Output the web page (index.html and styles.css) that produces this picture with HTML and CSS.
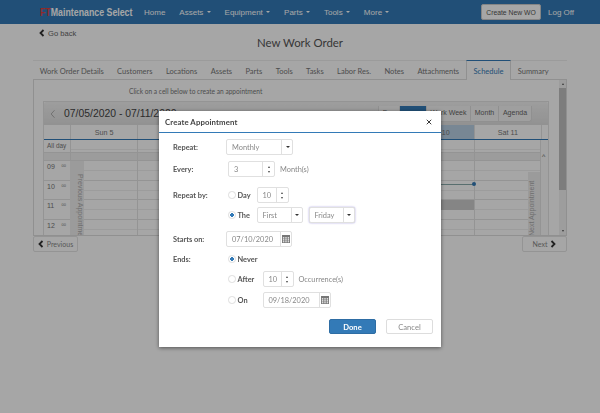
FILE: index.html
```html
<!DOCTYPE html>
<html lang="en">

<head>
  <meta charset="UTF-8">
  <meta name="viewport" content="width=device-width, initial-scale=1.0">
  <title>New Work Order</title>
  <link rel="stylesheet" href="styles.css">
</head>

<body>
  <header class="navbar">
    <div class="logo"><span class="logo-text"><span class="logo-ft">FT</span>Maintenance Select</span></div>
    <nav class="nav-links">
      <a>Home</a>
      <a>Assets <i class="caret"></i></a>
      <a>Equipment <i class="caret"></i></a>
      <a>Parts <i class="caret"></i></a>
      <a>Tools <i class="caret"></i></a>
      <a>More <i class="caret"></i></a>
    </nav>
    <button class="new-wo">Create New WO</button>
    <a class="log-off">Log Off</a>
  </header>

  <main class="page">
    <div class="go-back">
      <svg class="chev" viewBox="0 0 8 10"><path d="M6 1 2 5l4 4" /></svg>
      Go back
    </div>
    <h1 class="title">New Work Order</h1>

    <div class="tabs">
      <span class="tab">Work Order Details</span>
      <span class="tab">Customers</span>
      <span class="tab">Locations</span>
      <span class="tab">Assets</span>
      <span class="tab">Parts</span>
      <span class="tab">Tools</span>
      <span class="tab">Tasks</span>
      <span class="tab">Labor Res.</span>
      <span class="tab">Notes</span>
      <span class="tab">Attachments</span>
      <span class="tab active">Schedule</span>
      <span class="tab">Summary</span>
    </div>

    <section class="panel">
      <div class="panel-main">
        <p class="hint">Click on a cell below to create an appointment</p>
        <div class="scheduler">
          <div class="toolbar">
            <svg class="tool-prev" viewBox="0 0 8 12"><path d="M6 1 1.5 6 6 11" /></svg>
            <span class="date-range">07/05/2020 - 07/11/2020</span>
            <div class="views">
              <span class="view view-day">Day</span>
              <span class="view view-active">Week</span>
              <span class="view view-ww">Work Week</span>
              <span class="view view-month">Month</span>
              <span class="view view-agenda">Agenda</span>
            </div>
          </div>

          <div class="cal-head">
            <div class="time-head"></div>
            <div class="day-name">Sun 5</div>
            <div class="day-name">Mon 6</div>
            <div class="day-name">Tue 7</div>
            <div class="day-name">Wed 8</div>
            <div class="day-name">Thu 9</div>
            <div class="day-name today">Fri 10</div>
            <div class="day-name">Sat 11</div>
            <div class="scroll-col"></div>
          </div>

          <div class="cal-body">
            <div class="row row-allday">
              <div class="time allday">All day</div>
              <div class="days"></div>
            </div>
            <div class="row row-spacer">
              <div class="time"></div>
              <div class="days"></div>
            </div>
            <div class="row row-hour">
              <div class="time"><b>09</b><small>00</small></div>
              <div class="days"></div>
            </div>
            <div class="row row-hour">
              <div class="time"><b>10</b><small>00</small></div>
              <div class="days">
                <div class="event-line"></div>
              </div>
            </div>
            <div class="row row-hour">
              <div class="time"><b>11</b><small>00</small></div>
              <div class="days">
                <div class="busy-cell"></div>
              </div>
            </div>
            <div class="row row-hour">
              <div class="time"><b>12</b><small>00</small></div>
              <div class="days"></div>
            </div>

            <div class="strip strip-prev">Previous Appointment</div>
            <div class="strip strip-next">Next Appointment</div>
            <div class="scroll-col scroll-body"><span class="scroll-up">^</span></div>
          </div>
        </div>
      </div>
      <div class="scrollbar">
        <i class="sb-up"></i>
        <div class="sb-track"><div class="sb-thumb"></div></div>
        <i class="sb-down"></i>
      </div>
    </section>

    <div class="pager">
      <button class="page-btn">
        <svg class="chev" viewBox="0 0 8 10"><path d="M6 1 2 5l4 4" /></svg>
        Previous
      </button>
      <button class="page-btn">
        Next
        <svg class="chev" viewBox="0 0 8 10"><path d="M2 1l4 4-4 4" /></svg>
      </button>
    </div>
  </main>

  <div class="backdrop"></div>

  <div class="modal">
    <div class="modal-head">
      <span>Create Appointment</span>
      <svg class="close" viewBox="0 0 8 8"><path d="M1 1l6 6M7 1 1 7" /></svg>
    </div>
    <div class="modal-body">
      <div class="form-row r-repeat">
        <label class="lbl">Repeat:</label>
        <div class="combo w-monthly"><span class="val">Monthly</span><span class="arrow"><i class="caret"></i></span></div>
      </div>
      <div class="form-row r-every">
        <label class="lbl">Every:</label>
        <div class="num w-every"><span class="val">3</span><span class="spin"><i class="up"></i><i class="down"></i></span></div>
        <span class="note">Month(s)</span>
      </div>
      <div class="form-row r-by">
        <label class="lbl">Repeat by:</label>
        <span class="radio"></span><span class="opt opt-day">Day</span>
        <div class="num w-day"><span class="val">10</span><span class="spin"><i class="up"></i><i class="down"></i></span></div>
      </div>
      <div class="form-row r-the">
        <label class="lbl"></label>
        <span class="radio on"></span><span class="opt opt-the">The</span>
        <div class="combo w-first"><span class="val">First</span><span class="arrow"><i class="caret"></i></span></div>
        <div class="combo w-first focus"><span class="val">Friday</span><span class="arrow"><i class="caret"></i></span></div>
      </div>
      <div class="form-row r-starts">
        <label class="lbl">Starts on:</label>
        <div class="combo w-date"><span class="val">07/10/2020</span>
          <span class="arrow">
            <svg class="cal-icon" viewBox="0 0 9 9"><path d="M0 0h9v9H0zM1 2.5v1.4h1.6V2.5zm2.7 0v1.4h1.6V2.5zm2.7 0v1.4H8V2.5zM1 4.8v1.4h1.6V4.8zm2.7 0v1.4h1.6V4.8zm2.7 0v1.4H8V4.8zM1 7v1.2h1.6V7zm2.7 0v1.2h1.6V7zm2.7 0v1.2H8V7z" fill-rule="evenodd" /></svg>
          </span>
        </div>
      </div>
      <div class="form-row r-ends">
        <label class="lbl">Ends:</label>
        <span class="radio on"></span><span class="opt">Never</span>
      </div>
      <div class="form-row r-after">
        <label class="lbl"></label>
        <span class="radio"></span><span class="opt opt-after">After</span>
        <div class="num w-after"><span class="val">10</span><span class="spin"><i class="up"></i><i class="down"></i></span></div>
        <span class="note">Occurrence(s)</span>
      </div>
      <div class="form-row r-on">
        <label class="lbl"></label>
        <span class="radio"></span><span class="opt opt-after">On</span>
        <div class="combo w-date"><span class="val">09/18/2020</span>
          <span class="arrow">
            <svg class="cal-icon" viewBox="0 0 9 9"><path d="M0 0h9v9H0zM1 2.5v1.4h1.6V2.5zm2.7 0v1.4h1.6V2.5zm2.7 0v1.4H8V2.5zM1 4.8v1.4h1.6V4.8zm2.7 0v1.4h1.6V4.8zm2.7 0v1.4H8V4.8zM1 7v1.2h1.6V7zm2.7 0v1.2h1.6V7zm2.7 0v1.2H8V7z" fill-rule="evenodd" /></svg>
          </span>
        </div>
      </div>
      <div class="modal-actions">
        <button class="btn-done">Done</button>
        <button class="btn-cancel">Cancel</button>
      </div>
    </div>
  </div>
</body>

</html>
```

FILE: styles.css
```css
* {
  box-sizing: border-box;
}

body {
  margin: 0;
  height: 413px;
  overflow: hidden;
  background-color: #fff;
  color: #333;
  font-family: "Liberation Sans", Arial, sans-serif;
}

/* top bar */
.navbar {
  display: flex;
  align-items: center;
  height: 24px;
  padding-left: 40px;
  background-color: #337ab7;
  color: #fff;
  font-size: 8px;
}

.logo {
  width: 104px;
  flex: none;
  font-size: 11px;
  font-weight: bold;
  white-space: nowrap;
}

.logo-text {
  display: inline-block;
  transform: scaleX(0.8);
  transform-origin: left center;
}

.logo-ft {
  color: #e0403c;
}

.nav-links {
  display: flex;
  gap: 14px;
  width: 337px;
}

.caret {
  display: inline-block;
  width: 0;
  height: 0;
  margin-left: 1px;
  vertical-align: middle;
  border-top: 2.5px solid currentColor;
  border-left: 2.5px solid transparent;
  border-right: 2.5px solid transparent;
}

.new-wo {
  width: 60px;
  height: 16px;
  padding: 0;
  background-color: #fff;
  border: 1px solid #ccc;
  border-radius: 2px;
  color: #555;
  font-family: inherit;
  font-size: 6.8px;
}

.log-off {
  margin-left: 7px;
}

/* page under the dialog */
.page {
  padding: 0 33px;
}

.chev {
  width: 6px;
  height: 8px;
  fill: none;
  stroke: #333;
  stroke-width: 2.4;
}

.go-back {
  display: flex;
  align-items: center;
  gap: 3px;
  height: 12px;
  margin-top: 3px;
  padding-left: 6px;
  color: #666;
  font-size: 7.6px;
}

.title {
  height: 24px;
  margin: -3px 0 0;
  color: #555;
  font-family: Lato, sans-serif;
  font-size: 11.4px;
  font-weight: normal;
  line-height: 14px;
  text-align: center;
}

.tabs {
  display: flex;
  height: 20px;
  border-top: 1px solid #eee;
  border-bottom: 1px solid #ddd;
  font-family: Lato, sans-serif;
  font-size: 7.5px;
  color: #777;
}

.tab {
  padding: 6px 6.7px 0;
  white-space: nowrap;
}

.tab.active {
  height: 20px;
  margin-top: -1px;
  background-color: #fff;
  border-top: 1px solid #337ab7;
  border-left: 1px solid #ddd;
  border-right: 1px solid #ddd;
  color: #337ab7;
}

.panel {
  display: flex;
  height: 156px;
  overflow: hidden;
  border: 1px solid #ddd;
  border-top: 0;
}

.panel-main {
  flex: 1;
  min-width: 0;
  padding: 0 9px;
}

.hint {
  height: 21px;
  margin: 0;
  padding: 7px 0 0 86px;
  color: #777;
  font-family: Lato, sans-serif;
  font-size: 6.6px;
}

.scrollbar {
  display: flex;
  flex-direction: column;
  align-items: center;
  width: 7px;
  background-color: #f1f1f1;
}

.sb-up,
.sb-down {
  width: 0;
  height: 0;
  margin: 3px 0;
  border-left: 1.5px solid transparent;
  border-right: 1.5px solid transparent;
}

.sb-up {
  border-bottom: 2px solid #555;
}

.sb-down {
  border-top: 2px solid #555;
}

.sb-track {
  flex: 1;
  width: 100%;
}

.sb-thumb {
  height: 102px;
  background-color: #c1c1c1;
}

.scheduler {
  width: 506px;
  border: 1px solid #e4e4e4;
  border-bottom: 0;
}

.toolbar {
  display: flex;
  align-items: center;
  height: 23px;
  padding: 0 0 0 6px;
  background: linear-gradient(#f2f2f2, #e0e0e0);
  border-radius: 2px 2px 0 0;
}

.tool-prev {
  width: 6px;
  height: 10px;
  fill: none;
  stroke: #999;
  stroke-width: 1;
}

.date-range {
  margin-left: 8px;
  width: 314px;
  color: #444;
  font-size: 10.4px;
  white-space: nowrap;
}

.views {
  display: flex;
  height: 16px;
  color: #666;
  font-size: 7px;
  background-color: #f5f5f5;
  border: 1px solid #ddd;
  border-top: 0;
  border-radius: 0 0 3px 3px;
}

.view {
  padding-top: 3px;
  text-align: center;
  border-right: 1px solid #ddd;
}

.view-day {
  width: 21px;
}

.view-active {
  width: 27px;
  background-color: #337ab7;
  color: #337ab7;
}

.view-ww {
  width: 44px;
}

.view-month {
  width: 28px;
}

.view-agenda {
  width: 32px;
  border-right: 0;
}

.cal-head {
  display: flex;
  height: 15px;
  border-bottom: 1px solid #337ab7;
  font-size: 7.2px;
  color: #777;
}

.time-head {
  width: 26px;
  flex: none;
}

.day-name {
  width: 67.3px;
  flex: none;
  padding-top: 3px;
  text-align: center;
  border-left: 1px solid #e4e4e4;
}

.day-name.today {
  background-color: #b8cfe4;
}

.scroll-col {
  flex: 1;
  border-left: 1px solid #e4e4e4;
}

.cal-body {
  position: relative;
}

.row {
  display: flex;
  border-bottom: 1px solid #e4e4e4;
}

.row-allday {
  height: 13px;
}

.row-spacer {
  height: 8px;
  background-color: #f0f0f0;
}

.row-hour {
  height: 19.7px;
}

.time {
  position: relative;
  display: flex;
  justify-content: space-between;
  width: 26px;
  flex: none;
  padding: 2px 4px 0 3px;
  color: #777;
  font-size: 7px;
}

.time b {
  font-weight: normal;
}

.time small {
  font-size: 4px;
}

.allday {
  font-size: 6.4px;
  white-space: nowrap;
}

.days {
  position: relative;
  width: 472px;
  flex: none;
  background-image:
    repeating-linear-gradient(90deg, #e4e4e4 0, #e4e4e4 1px, transparent 1px, transparent 67.3px),
    linear-gradient(transparent 9px, #f0f0f0 9px, #f0f0f0 10px, transparent 10px);
}

.event-line {
  position: absolute;
  top: 3px;
  left: 300px;
  width: 104px;
  height: 1px;
  background-color: #8aa;
}

.event-line::after {
  content: "";
  position: absolute;
  top: -1.5px;
  right: -2px;
  width: 4px;
  height: 4px;
  border-radius: 50%;
  background-color: #337ab7;
}

.busy-cell {
  position: absolute;
  top: 0;
  left: 337px;
  width: 67.3px;
  height: 10px;
  background-color: #ccc;
}

.strip {
  position: absolute;
  top: 21px;
  height: 75px;
  width: 14px;
  padding-top: 13px;
  background-color: #eee;
  color: #aaa;
  font-size: 7px;
  white-space: nowrap;
  writing-mode: vertical-rl;
}

.strip-prev {
  left: 26px;
}

.strip-next {
  left: 484px;
  top: 32px;
  height: 64px;
  padding: 0;
  transform: rotate(180deg);
}

.scroll-body {
  position: absolute;
  top: 0;
  right: 0;
  bottom: 0;
  width: 8px;
  background-color: #fafafa;
  border-bottom: 1px solid #e4e4e4;
}

.scroll-up {
  position: absolute;
  top: 13px;
  left: 1px;
  color: #666;
  font-size: 7px;
}

.pager {
  display: flex;
  justify-content: space-between;
}

.page-btn {
  display: flex;
  align-items: center;
  justify-content: center;
  gap: 3px;
  width: 45px;
  height: 16px;
  padding: 0;
  background-color: #fff;
  border: 1px solid #e4e4e4;
  border-radius: 2px;
  color: #888;
  font-family: Lato, sans-serif;
  font-size: 7px;
}

/* dialog */
.backdrop {
  position: fixed;
  inset: 0;
  background-color: rgba(0, 0, 0, 0.35);
}

.modal {
  position: fixed;
  top: 111px;
  left: 159px;
  width: 282px;
  height: 236px;
  background-color: #fff;
  box-shadow: 0 1px 4px rgba(0, 0, 0, 0.5);
  font-family: Lato, sans-serif;
  color: #444;
}

.modal-head {
  display: flex;
  justify-content: space-between;
  align-items: center;
  height: 22px;
  padding: 0 9px 0 6px;
  border-bottom: 1px solid #337ab7;
  font-size: 7.8px;
  font-weight: bold;
  letter-spacing: 0.1px;
}

.close {
  width: 6px;
  height: 6px;
  fill: none;
  stroke: #333;
  stroke-width: 1.3;
}

.modal-body {
  display: flex;
  flex-direction: column;
  padding: 6px 8px 0 14px;
}

.form-row {
  display: flex;
  align-items: center;
  height: 16px;
  font-size: 7.4px;
}

.r-every {
  margin-top: 6px;
}

.r-by {
  margin-top: 10px;
}

.r-the {
  margin-top: 4px;
}

.r-starts {
  margin-top: 8px;
}

.r-ends {
  margin-top: 4px;
}

.r-after {
  margin-top: 4px;
}

.r-on {
  margin-top: 5px;
}

.lbl {
  width: 53px;
  flex: none;
  font-weight: bold;
  color: #555;
}

.val {
  flex: 1;
  padding-left: 5px;
  color: #888;
  white-space: nowrap;
}

.combo,
.num {
  display: flex;
  align-items: center;
  height: 16px;
  background-color: #fff;
  border: 1px solid #e0e0e0;
  border-radius: 2px;
}

.arrow,
.spin {
  display: flex;
  align-items: center;
  justify-content: center;
  height: 100%;
  border-left: 1px solid #e0e0e0;
  color: #333;
}

.arrow {
  width: 11px;
}

.spin {
  flex-direction: column;
  gap: 3px;
  width: 12px;
}

.up,
.down {
  width: 0;
  height: 0;
  border-left: 1.5px solid transparent;
  border-right: 1.5px solid transparent;
}

.up {
  border-bottom: 2px solid #444;
}

.down {
  border-top: 2px solid #444;
}

.w-monthly {
  width: 67px;
}

.w-every {
  width: 47px;
  margin-left: 2px;
}

.note {
  margin-left: 5px;
  color: #888;
}

.radio {
  width: 7.5px;
  height: 7.5px;
  flex: none;
  margin-left: 2px;
  border: 1px solid #ddd;
  border-radius: 50%;
  background-color: #fff;
}

.radio.on {
  background: radial-gradient(circle, #337ab7 0, #337ab7 1.6px, #fff 2.1px);
}

.opt {
  margin-left: 2px;
  font-weight: bold;
  color: #555;
}

.opt-day,
.opt-the {
  width: 19px;
}

.opt-after {
  width: 25px;
}

.w-day {
  width: 32px;
}

.w-first {
  width: 46px;
}

.w-first + .w-first {
  margin-left: 6px;
}

.focus {
  box-shadow: 0 0 2px rgba(102, 90, 200, 0.6);
}

.w-date {
  width: 66px;
}

.w-after {
  width: 31px;
}

.r-on .w-date {
  width: 68px;
}

.cal-icon {
  width: 8px;
  height: 8px;
  fill: #777;
}

.modal-actions {
  display: flex;
  justify-content: flex-end;
  gap: 10px;
  margin-top: 11px;
}

.btn-done,
.btn-cancel {
  width: 47px;
  height: 15px;
  padding: 0;
  border-radius: 2px;
  font-family: inherit;
  font-size: 7.6px;
}

.btn-done {
  background-color: #337ab7;
  border: 1px solid #2e6da4;
  color: #fff;
  font-weight: bold;
}

.btn-cancel {
  background-color: #fff;
  border: 1px solid #ddd;
  color: #888;
}
```
